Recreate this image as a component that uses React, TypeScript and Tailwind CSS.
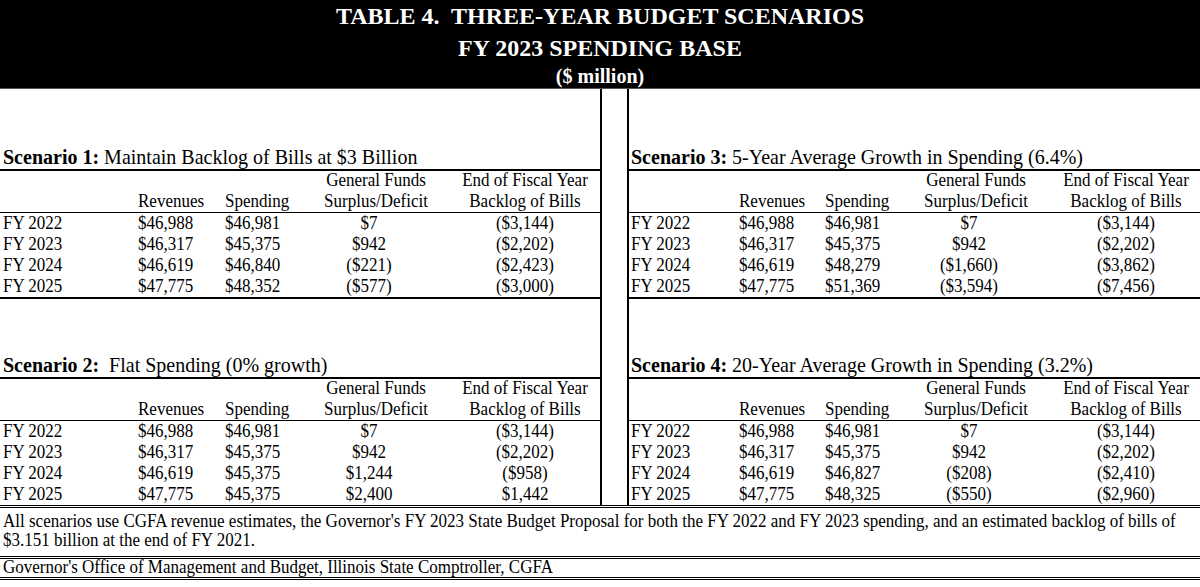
import React from "react";

type Row = [string, string, string, string, string];

type Cols = { label: string; rev: string; spend: string; gf: string; gfv: string; bk: string };

const LEFT: Cols = {
  label: "w-[136px] pl-[3px]",
  rev: "w-[86px] pl-[2px]",
  spend: "w-[80px] pl-[3px]",
  gf: "w-[148px] text-center",
  gfv: "w-[148px] text-center pr-[14px]",
  bk: "w-[150px] text-center",
};

const RIGHT: Cols = {
  label: "w-[110px] pl-[2px]",
  rev: "w-[86px]",
  spend: "w-[80px]",
  gf: "w-[142px] text-center",
  gfv: "w-[142px] text-center pr-[14px]",
  bk: "w-[153px] pl-[5px] text-center",
};

function Table({
  num,
  title,
  rows,
  cols,
  last,
}: {
  num: string;
  title: string;
  rows: Row[];
  cols: Cols;
  last?: boolean;
}) {
  return (
    <div className="flex flex-col">
      <div className={`h-[24px] leading-[24px] text-[20px] whitespace-pre scale-y-[1.06] ${cols === LEFT ? "pl-[3px]" : "pl-[2px]"}`}>
        <span className="font-bold">Scenario {num}:</span>
        {title}
      </div>
      <div className="h-[2px] bg-black" />
      <div className="text-[17px]">
        <div className="flex h-[20.5px] leading-[20.5px] scale-y-[1.08]">
          <div className={cols.label} />
          <div className={cols.rev} />
          <div className={cols.spend} />
          <div className={cols.gf}>General Funds</div>
          <div className={cols.bk}>End of Fiscal Year</div>
        </div>
        <div className="flex h-[20.5px] leading-[20.5px] scale-y-[1.08]">
          <div className={cols.label} />
          <div className={cols.rev}>Revenues</div>
          <div className={cols.spend}>Spending</div>
          <div className={cols.gf}>Surplus/Deficit</div>
          <div className={cols.bk}>Backlog of Bills</div>
        </div>
        <div className="h-[1px] bg-black" />
        {rows.map((r) => (
          <div key={r[0]} className="flex h-[21px] leading-[21px] scale-y-[1.08]">
            <div className={cols.label}>{r[0]}</div>
            <div className={cols.rev}>{r[1]}</div>
            <div className={cols.spend}>{r[2]}</div>
            <div className={cols.gfv}>{r[3]}</div>
            <div className={cols.bk}>{r[4]}</div>
          </div>
        ))}
      </div>
      {!last && <div className="h-[2px] bg-black" />}
    </div>
  );
}

const s1: Row[] = [
  ["FY 2022", "$46,988", "$46,981", "$7", "($3,144)"],
  ["FY 2023", "$46,317", "$45,375", "$942", "($2,202)"],
  ["FY 2024", "$46,619", "$46,840", "($221)", "($2,423)"],
  ["FY 2025", "$47,775", "$48,352", "($577)", "($3,000)"],
];
const s2: Row[] = [
  ["FY 2022", "$46,988", "$46,981", "$7", "($3,144)"],
  ["FY 2023", "$46,317", "$45,375", "$942", "($2,202)"],
  ["FY 2024", "$46,619", "$45,375", "$1,244", "($958)"],
  ["FY 2025", "$47,775", "$45,375", "$2,400", "$1,442"],
];
const s3: Row[] = [
  ["FY 2022", "$46,988", "$46,981", "$7", "($3,144)"],
  ["FY 2023", "$46,317", "$45,375", "$942", "($2,202)"],
  ["FY 2024", "$46,619", "$48,279", "($1,660)", "($3,862)"],
  ["FY 2025", "$47,775", "$51,369", "($3,594)", "($7,456)"],
];
const s4: Row[] = [
  ["FY 2022", "$46,988", "$46,981", "$7", "($3,144)"],
  ["FY 2023", "$46,317", "$45,375", "$942", "($2,202)"],
  ["FY 2024", "$46,619", "$46,827", "($208)", "($2,410)"],
  ["FY 2025", "$47,775", "$48,325", "($550)", "($2,960)"],
];

export default function App() {
  return (
    <div
      className="w-[1200px] h-[587px] bg-white text-black overflow-hidden"
      style={{ fontFamily: '"Liberation Serif", "Times New Roman", serif' }}
    >
      <div className="h-[89px] bg-black text-white font-bold flex flex-col items-center border-b border-[#555]">
        <div className="h-[32px] leading-[32px] text-[24px] whitespace-pre">TABLE 4.  THREE-YEAR BUDGET SCENARIOS</div>
        <div className="h-[32px] leading-[32px] text-[24px]">FY 2023 SPENDING BASE</div>
        <div className="h-[24px] leading-[24px] text-[20px]">($ million)</div>
      </div>
      <div className="flex">
        <div className="w-[600px] flex flex-col">
          <div className="h-[56px]" />
          <Table num="1" title=" Maintain Backlog of Bills at $3 Billion" rows={s1} cols={LEFT} />
          <div className="h-[54px]" />
          <Table num="2" title="  Flat Spending (0% growth)" rows={s2} cols={LEFT} last />
        </div>
        <div className="w-[29px] border-x-2 border-black" />
        <div className="w-[571px] flex flex-col">
          <div className="h-[56px]" />
          <Table num="3" title=" 5-Year Average Growth in Spending (6.4%)" rows={s3} cols={RIGHT} />
          <div className="h-[54px]" />
          <Table num="4" title=" 20-Year Average Growth in Spending (3.2%)" rows={s4} cols={RIGHT} last />
        </div>
      </div>
      <div className="h-[3px] border-y border-black" />
      <div className="text-[17px] pl-[3px] pt-[4px] leading-[19px] h-[48px]">
        <div className="whitespace-nowrap scale-y-[1.08]">
          All scenarios use CGFA revenue estimates, the Governor's FY 2023 State Budget Proposal for both the FY 2022 and FY 2023 spending, and an estimated backlog of bills of
        </div>
        <div className="scale-y-[1.08]">$3.151 billion at the end of FY 2021.</div>
      </div>
      <div className="h-[3px] border-y border-black" />
      <div className="text-[17px] pl-[3px] h-[18px] leading-[18px] scale-y-[1.08]">
        Governor's Office of Management and Budget, Illinois State Comptroller, CGFA
      </div>
      <div className="h-[3px] border-y border-black" />
    </div>
  );
}
